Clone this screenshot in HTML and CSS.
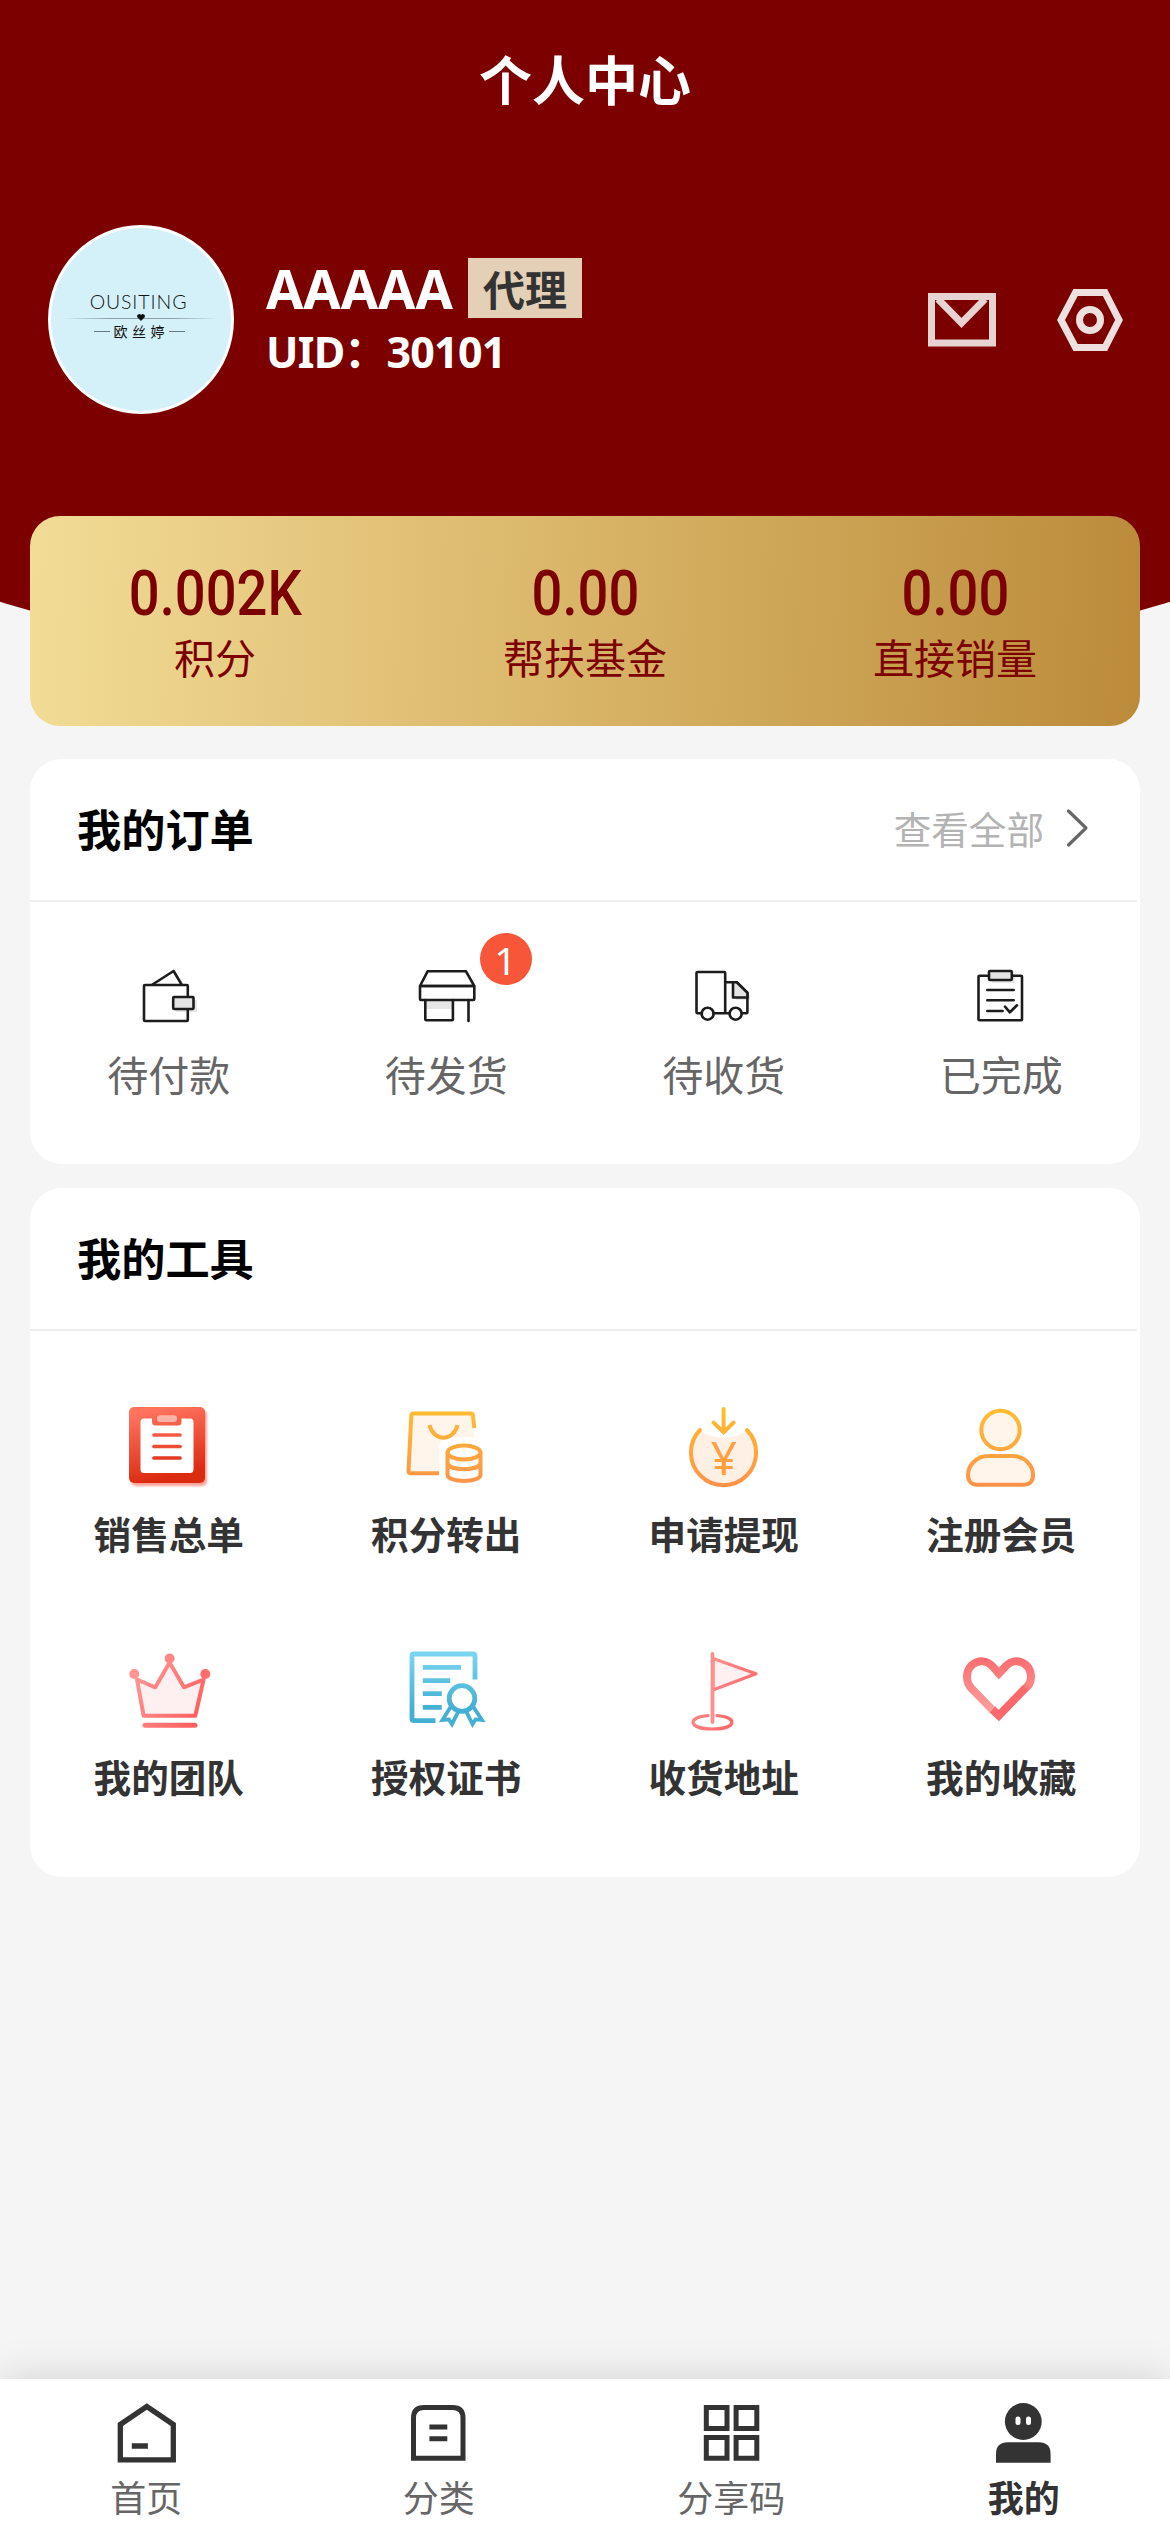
FILE: index.html
```html
<!DOCTYPE html>
<html lang="zh-CN">
<head>
<meta charset="utf-8">
<title>个人中心</title>
<link rel="stylesheet" href="styles.css">
</head>
<body>
<svg class="defs" width="0" height="0" aria-hidden="true">
  <defs>
    <linearGradient id="red" x1="0" y1="0" x2="0.25" y2="1"><stop offset="0.1" stop-color="#ff745f"/><stop offset="1" stop-color="#db2b10"/></linearGradient>
    <linearGradient id="amber" gradientUnits="userSpaceOnUse" x1="0" y1="4" x2="0" y2="80"><stop offset="0" stop-color="#ffbd31"/><stop offset="1" stop-color="#ff9248"/></linearGradient>
    <linearGradient id="rose" gradientUnits="userSpaceOnUse" x1="10" y1="20" x2="70" y2="60"><stop offset="0" stop-color="#ff9896"/><stop offset="1" stop-color="#fe6364"/></linearGradient>
    <linearGradient id="aqua" gradientUnits="userSpaceOnUse" x1="0" y1="5" x2="0" y2="60"><stop offset="0" stop-color="#79d5f0"/><stop offset="1" stop-color="#43afd2"/></linearGradient>
    <linearGradient id="heart" gradientUnits="userSpaceOnUse" x1="0" y1="10" x2="0" y2="62"><stop offset="0" stop-color="#fa6e70"/><stop offset="1" stop-color="#ff9f9f"/></linearGradient>
  </defs>
</svg>
<div class="page">
  <header class="hero">
    <h1 class="hero-title">个人中心</h1>
    <div class="profile">
      <div class="avatar">
        <div class="logo-name">OUSITING</div>
        <div class="logo-rule"><svg width="8" height="7" viewBox="0 0 8 7"><path d="M4 7L.6 3.6A2 2 0 0 1 4 1a2 2 0 0 1 3.4 2.6z" fill="#111"/></svg></div>
        <div class="logo-sub"><i></i><span>欧丝婷</span><i></i></div>
      </div>
      <div class="who">
        <div class="name-row"><span class="name">AAAAA</span><span class="level">代理</span></div>
        <div class="uid">UID：30101</div>
      </div>
      <div class="actions">
        <svg width="68" height="54" viewBox="0 0 68 54" fill="none" stroke="#e8d3d3" stroke-width="7"><rect x="3.5" y="3.5" width="61" height="46.500"/><path d="M10 6L33.500 30 57 6"/></svg>
        <svg width="66" height="62" viewBox="0 0 66 62" fill="none" stroke="#efe0e0" stroke-width="7"><path d="M18.500 3.500H48L62 31 48 58.500H18.500L4 31z"/><circle cx="33" cy="31" r="10.500"/></svg>
      </div>
    </div>
  </header>

  <main class="content">
    <section class="stats">
      <div class="stat"><b>0.002K</b><span>积分</span></div>
      <div class="stat"><b>0.00</b><span>帮扶基金</span></div>
      <div class="stat"><b>0.00</b><span>直接销量</span></div>
    </section>

    <section class="card orders">
      <div class="card-head">
        <h2>我的订单</h2>
        <a class="more">查看全部<svg width="24" height="42" viewBox="0 0 24 42" fill="none" stroke="#666" stroke-width="3.200" stroke-linecap="round" stroke-linejoin="round"><path d="M3.500 4L21 21 3.500 38"/></svg></a>
      </div>
      <div class="order-grid">
        <div class="order">
          <svg class="line-icon" viewBox="0 0 64 60"><rect x="39" y="34" width="21" height="12" class="shade"/><path d="M15.500 18.500L36.600 5l8 13.500"/><rect x="7" y="19" width="43.800" height="36" rx="1"/><rect x="36.200" y="31" width="20.300" height="12" rx="1" class="fill"/></svg>
          <span>待付款</span>
        </div>
        <div class="order">
          <svg class="line-icon" viewBox="0 0 64 60"><rect x="12" y="34" width="26" height="9" class="shade"/><path d="M13.600 5.300H52L60.300 20H6zM11.300 34v19.300q0 1 1 1h25.600q1 0 1-1V34M54.500 34v21"/><rect x="6" y="20" width="54.300" height="14" rx="1"/></svg>
          <i class="badge">1</i>
          <span>待发货</span>
        </div>
        <div class="order">
          <svg class="line-icon" viewBox="0 0 64 60"><path d="M44 19h4l10 10v5H44z" class="shade"/><path d="M10 47.300H5.500q-1 0-1-1V7q0-1 1-1h26.700q1 0 1 1v40.300M21.500 47.300h16M33.200 16.300h11.500l10.700 10.400v19.600q0 1-1 1H50"/><path d="M41 16.300h3.700l10.700 10.400v4.800H41z" class="fill"/><circle cx="15.600" cy="47.700" r="6"/><circle cx="43.600" cy="47.700" r="6"/></svg>
          <span>待收货</span>
        </div>
        <div class="order">
          <svg class="line-icon" viewBox="0 0 64 60"><rect x="23" y="8" width="23" height="9" class="shade"/><path d="M20 9.700h-9.500q-1 0-1 1v42.600q0 1 1 1H52q1 0 1-1V10.700q0-1-1-1h-9M18.300 24h26.400M18.300 34.300h26.400M18.300 45h15.300M36 40.700l4.900 5.600L48 39.300"/><rect x="20" y="5" width="22.800" height="9" rx="1" class="fill"/></svg>
          <span>已完成</span>
        </div>
      </div>
    </section>

    <section class="card tools">
      <div class="card-head"><h2>我的工具</h2></div>
      <div class="tool-grid">
        <div class="tool">
          <svg class="tool-icon board" viewBox="0 0 84 84"><rect x="2" y="1" width="76" height="76" rx="5" fill="url(#red)"/><path d="M17 12.500h8V16q0 3.500 3.500 3.500H51q3.500 0 3.500-3.500v-3.500h8.500q3.500 0 3.500 3.500v47.500q0 3.500-3.500 3.500H17q-3.500 0-3.500-3.500V16q0-3.500 3.500-3.500z" fill="#fff"/><rect x="30" y="9.300" width="20" height="6.700" rx="3.300" fill="#ffb3a8"/><g stroke-width="3.700" stroke-linecap="round"><path d="M27 29h26" stroke="#f85c45"/><path d="M27 40.500h26" stroke="#ee4d35"/><path d="M27 52h26" stroke="#e33a23"/></g></svg>
          <span>销售总单</span>
        </div>
        <div class="tool">
          <svg class="tool-icon" viewBox="0 0 84 84" fill="none" stroke="url(#amber)" stroke-width="4"><path d="M8 7.500h60.500L70 31H46q-11 2-11 12v24H4.500z" fill="#fff5eb" stroke="none"/><path d="M70.300 22L69 9.500q-.2-2-2-2H9.400q-2 0-2.100 2L4.500 65q-.1 2.300 2 2.300H35M25.500 19c4 17 24 17 28 0M43.500 47v21.500c0 8.500 33 8.500 33 0V47"/><ellipse cx="60" cy="46.500" rx="16.500" ry="7"/><path d="M43.500 57.500c3 7.500 30 7.500 33 0"/></svg>
          <span>积分转出</span>
        </div>
        <div class="tool">
          <svg class="tool-icon" viewBox="0 0 84 84" fill="none" stroke="url(#amber)" stroke-width="4" stroke-linecap="round"><path d="M18 24C1 42 11 80 41.700 79.800 72 80 82 42 65 24c-9 10-37 10-47 0z" fill="#fff0e6" stroke="none"/><path d="M18 24A32.600 32.600 0 1 0 65 24M41.600 3v22M31.500 16.500l10.100 9.800 10.100-9.800"/><text class="yen" x="42" y="68.500">¥</text></svg>
          <span>申请提现</span>
        </div>
        <div class="tool">
          <svg class="tool-icon" viewBox="0 0 84 84" fill="#fff5eb" stroke="url(#amber)" stroke-width="4"><circle cx="41.500" cy="24" r="19.200"/><path d="M29 50h25c11 0 20 9 20 19 0 7-4 9.700-9 9.700H18c-5 0-9-3-9-9.700C9 59 18 50 29 50z"/></svg>
          <span>注册会员</span>
        </div>
        <div class="tool">
          <svg class="tool-icon" viewBox="0 0 84 84" fill="none" stroke="url(#rose)" stroke-width="4"><path d="M10 30.500l18.300 7.800L42.600 13.500 57 38.300l19.600-7.800-8.300 36.200H16.600z" fill="#fef0f0" stroke-linejoin="round"/><path d="M18 76.300h50" stroke-width="5" stroke-linecap="round"/><circle cx="7.300" cy="25" r="5" fill="#ff9492" stroke="none"/><circle cx="42.600" cy="9.500" r="5" fill="#ff8785" stroke="none"/><circle cx="78.300" cy="25" r="5" fill="#fe6c6c" stroke="none"/></svg>
          <span>我的团队</span>
        </div>
        <div class="tool">
          <svg class="tool-icon" viewBox="0 0 84 84" fill="none" stroke="url(#aqua)" stroke-width="4.800"><path d="M71 30.500V7q0-2-2-2H10q-2 0-2 2v62.700q0 2 2 2h21.500M18.800 18.300H57M18.800 31.700h27.400M18.800 44.700h19M18.800 58.400h19"/><circle cx="58" cy="49.500" r="12.800"/><path d="M46.500 58l-8 13 6.500-.6 3 4.800 6-12M69.500 58l8.500 13-6.500-.6-3 4.800-6-12" stroke-width="3.800"/></svg>
          <span>授权证书</span>
        </div>
        <div class="tool">
          <svg class="tool-icon" viewBox="0 0 84 84" fill="none" stroke="url(#rose)" stroke-width="3.200" stroke-linejoin="round" stroke-linecap="round"><path d="M31 9.500l43 15.200L31 41z" fill="#fef0f0"/><path d="M30.500 5v68" stroke="#ff8e8c" stroke-width="3.800"/><path d="M26 66.600c-21 1.400-20 13.400 4.500 13.400s25.500-12 4.500-13.400"/></svg>
          <span>收货地址</span>
        </div>
        <div class="tool">
          <svg class="tool-icon" viewBox="0 0 84 84" fill="none" stroke-width="8"><path d="M34 61.500L13 40Q8 35 8 28C8 13 25 7 34 18l5.800 6.500L46 18c9-11 26-5 26 10q0 5-3 9" stroke="url(#heart)"/><path d="M67 39q1-1.200 2.200-2.600" stroke="#fc7d7e"/><path d="M33.500 60.500l6.300 6L67 38.500" stroke="#fa6a6d"/></svg>
          <span>我的收藏</span>
        </div>
      </div>
    </section>
  </main>

  <nav class="tabs">
    <a class="tab"><svg viewBox="0 0 64 64" fill="none" stroke="#333" stroke-width="5.300"><path d="M32.800 5.500l26.500 18v35.300H6.300V23.500zM17.800 45h16.100"/></svg><span>首页</span></a>
    <a class="tab"><svg viewBox="0 0 64 64" fill="none" stroke="#333" stroke-width="5"><path d="M6.500 57.300V17q0-10.500 10.500-10.500h28.500Q56 6.500 56 17v40.300zM22.400 26h17.900M22.400 37.700h17.900"/></svg><span>分类</span></a>
    <a class="tab"><svg viewBox="0 0 64 64" fill="none" stroke="#333" stroke-width="5"><path d="M7.300 6.500H28v21H7.300zM37.100 6.500h20.700v21H37.100zM7.300 36.500H28v20.700H7.300zM37.100 36.500h20.700v20.700H37.100z"/></svg><span>分享码</span></a>
    <a class="tab active"><svg viewBox="0 0 64 64" fill="#333"><circle cx="31.300" cy="20.500" r="18.400"/><path d="M4 61.700V53q0-11.700 12-11.700h30.600q12 0 12 11.700v8.700z"/><rect x="23.500" y="15.500" width="5" height="8.500" rx="2.500" fill="#fff"/><rect x="34" y="15.500" width="5" height="8.500" rx="2.500" fill="#fff"/></svg><span>我的</span></a>
  </nav>
</div>
</body>
</html>
```

FILE: styles.css
```css
* { box-sizing: border-box; margin: 0; padding: 0; }
body {
  background: #f5f5f5;
  font-family: "Noto Sans", "Noto Sans CJK SC", sans-serif;
  color: #333;
}
i { font-style: normal; }
svg { display: block; flex: none; }
.defs { position: absolute; }
.page {
  width: 1170px;
  height: 2532px;
  display: flex;
  flex-direction: column;
  overflow: hidden;
}

.hero {
  height: 684px;
  flex: none;
  background: #7c0000;
  clip-path: ellipse(1231px 684px at 50% 0);
}
.hero-title {
  height: 162px;
  line-height: 162px;
  text-align: center;
  font-size: 53px;
  font-weight: 700;
  color: #fff;
}
.profile {
  display: flex;
  align-items: center;
  padding: 63px 47px 0 48px;
}
.avatar {
  width: 186px;
  height: 189px;
  border: 3px solid #fff;
  border-radius: 50%;
  background: #d4f1fa;
  color: #111;
  display: flex;
  flex-direction: column;
  align-items: center;
  padding-top: 62px;
}
.logo-name {
  font: 300 19.5px/24px Lato, sans-serif;
  letter-spacing: .9px;
  padding-right: 5px;
}
.logo-rule {
  width: 156px;
  height: 8px;
  display: flex;
  justify-content: center;
  background: linear-gradient(90deg, transparent, #8aa0a6 30%, #8aa0a6 70%, transparent) center / 100% 1px no-repeat;
}
.logo-sub {
  display: flex;
  align-items: center;
  gap: 4px;
  font: 14px/17px "Noto Sans CJK SC", sans-serif;
  margin-top: 1px;
  padding-right: 4px;
}
.logo-sub span { letter-spacing: 4.5px; margin-right: -4.5px; }
.logo-sub i { width: 16px; height: 1px; background: #647a80; }
.who { margin-left: 32px; flex: 1; }
.name-row { display: flex; align-items: center; height: 60px; }
.name { font-size: 54px; font-weight: 700; line-height: 60px; color: #fff; width: 202px; }
.level {
  width: 114px;
  height: 60px;
  line-height: 63px;
  text-align: center;
  font-size: 42px;
  font-weight: 700;
  background: #e4d0b6;
}
.uid { font-size: 43px; line-height: 60px; letter-spacing: -.8px; font-weight: 700; color: #fff; margin-top: 4px; }
.actions { display: flex; align-items: center; gap: 61px; }

.content { flex: 1; margin-top: -168px; padding: 0 30px; position: relative; }
.stats {
  height: 210px;
  border-radius: 30px;
  background: linear-gradient(92deg, #f2dc96, #d9b568 49%, #bb8b3a);
  display: grid;
  grid-template-columns: repeat(3, 1fr);
  color: #7c0000;
  padding-top: 45px;
}
.stat { display: flex; flex-direction: column; align-items: center; }
.stat b {
  font: 500 63px/65px Roboto, sans-serif;
  transform: scaleX(.862);
}
.stat span { font-size: 41px; line-height: 60px; margin-top: 2px; }

.card { background: #fff; border-radius: 32px; }
.orders { margin-top: 33px; height: 405px; }
.tools { margin-top: 24px; height: 689px; }
.card-head {
  height: 143px;
  margin-right: 3px;
  padding: 0 48px 0 47px;
  border-bottom: 2px solid #eee;
  display: flex;
  align-items: center;
  justify-content: space-between;
}
.card-head h2 { font-size: 44.2px; line-height: 60px; font-weight: 700; color: #000; }
.more { display: flex; align-items: center; gap: 21px; font-size: 37.6px; line-height: 60px; color: #b3b3b3; }
.more svg { margin-top: -4px; }

.order-grid, .tool-grid { display: grid; grid-template-columns: repeat(4, 1fr); }
.order-grid { padding-top: 64px; }
.order { display: flex; flex-direction: column; align-items: center; position: relative; }
.order span { font-size: 41px; line-height: 60px; color: #666; margin-top: 19px; }
.line-icon {
  width: 64px;
  height: 60px;
  fill: none;
  stroke: #1c1c1c;
  stroke-width: 2.6;
  stroke-linecap: round;
  stroke-linejoin: round;
}
.line-icon .shade { fill: #e6e6e6; stroke: none; }
.line-icon .fill { fill: #e4e4e4; }
.badge {
  position: absolute;
  left: 172px;
  top: -33px;
  width: 52px;
  height: 52px;
  border-radius: 50%;
  background: #f75638;
  color: #fff;
  font-size: 39px;
  line-height: 54px;
  text-align: center;
}

.tool-grid { padding-top: 75px; grid-auto-rows: 243px; }
.tool { display: flex; flex-direction: column; align-items: center; }
.tool-icon { width: 84px; height: 84px; }
.board { filter: drop-shadow(2px 3px 1px rgba(245, 70, 50, .5)); }
.yen { font: 46px "Noto Sans", sans-serif; text-anchor: middle; fill: #ffa03f; stroke: none; }
.tool span { font-size: 37.6px; line-height: 60px; font-weight: 700; margin-top: 15px; }

.tabs {
  height: 153px;
  flex: none;
  display: grid;
  grid-template-columns: repeat(4, 1fr);
  background: #fff;
  box-shadow: 0 0 40px rgba(0, 0, 0, .15);
  position: relative;
  padding-top: 22px;
}
.tab { display: flex; flex-direction: column; align-items: center; font-size: 36px; line-height: 54px; color: #666; }
.tab svg { width: 64px; height: 64px; }
.tab span { margin-top: 7px; }
.tab.active { color: #333; font-weight: 700; }
```
